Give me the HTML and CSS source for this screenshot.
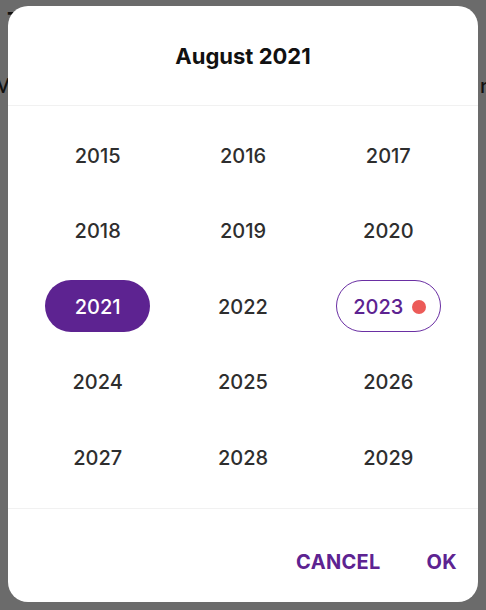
FILE: index.html
```html
<!DOCTYPE html>
<html>
<head>
<meta charset="utf-8">
<link rel="stylesheet" href="styles.css">
</head>
<body>
<div class="backdrop">
  <div class="bg-top">T</div>
  <div class="bg-line"><span>M</span><span>n</span></div>
</div>
<div class="dialog">
  <div class="header">August 2021</div>
  <div class="grid">
    <div class="cell"><span class="year">2015</span></div>
    <div class="cell"><span class="year">2016</span></div>
    <div class="cell"><span class="year">2017</span></div>
    <div class="cell"><span class="year">2018</span></div>
    <div class="cell"><span class="year">2019</span></div>
    <div class="cell"><span class="year">2020</span></div>
    <div class="cell"><span class="year selected">2021</span></div>
    <div class="cell"><span class="year">2022</span></div>
    <div class="cell"><span class="year current">2023<i class="dot"></i></span></div>
    <div class="cell"><span class="year">2024</span></div>
    <div class="cell"><span class="year">2025</span></div>
    <div class="cell"><span class="year">2026</span></div>
    <div class="cell"><span class="year">2027</span></div>
    <div class="cell"><span class="year">2028</span></div>
    <div class="cell"><span class="year">2029</span></div>
  </div>
  <div class="footer">
    <button class="btn">CANCEL</button>
    <button class="btn">OK</button>
  </div>
</div>
</body>
</html>
```
FILE: styles.css
```css
* { box-sizing: border-box; }
html, body { margin: 0; padding: 0; }
body {
  width: 486px;
  height: 610px;
  background: #6b6b6b;
  font-family: Inter, "Noto Sans", sans-serif;
  position: relative;
  overflow: hidden;
}
.backdrop {
  position: absolute;
  inset: 0;
}
.bg-top {
  position: absolute;
  left: 7px;
  top: 7px;
  font-size: 22px;
  font-weight: 700;
  color: #111;
}
.bg-line {
  position: absolute;
  left: -6px;
  right: -6px;
  top: 74px;
  display: flex;
  justify-content: space-between;
  font-size: 20px;
  font-weight: 500;
  color: #111;
}
.dialog {
  position: absolute;
  left: 8px;
  top: 6px;
  width: 470px;
  height: 596px;
  background: #fff;
  border-radius: 20px;
  display: flex;
  flex-direction: column;
  overflow: hidden;
}
.header {
  height: 100px;
  flex: none;
  display: flex;
  align-items: center;
  justify-content: center;
  font-size: 22px;
  font-weight: 700;
  color: #111;
  border-bottom: 1px solid #f1f1f1;
  padding-top: 1px;
}
.grid {
  display: grid;
  grid-template-columns: repeat(3, 1fr);
  grid-auto-rows: 75.5px;
  padding: 11px 17px 13px;
  border-bottom: 1px solid #f1f1f1;
}
.cell {
  display: flex;
  align-items: center;
  justify-content: center;
}
.year {
  width: 105px;
  height: 52px;
  border-radius: 26px;
  display: flex;
  align-items: center;
  justify-content: center;
  font-size: 20px;
  font-weight: 500;
  color: #2e2e2e;
  padding-top: 2px;
}
.year.selected {
  background: #5d2391;
  color: #fff;
}
.year.current {
  border: 1.5px solid #6a2fa3;
  color: #5d2391;
  gap: 9px;
  padding-left: 3px;
}
.dot {
  width: 14px;
  height: 14px;
  border-radius: 50%;
  background: #ec5b58;
  display: inline-block;
}
.footer {
  flex: 1;
  display: flex;
  justify-content: flex-end;
  align-items: center;
  gap: 46px;
  padding: 14px 21px 0 0;
}
.btn {
  border: 0;
  background: none;
  padding: 0;
  font-family: Inter, "Noto Sans", sans-serif;
  font-size: 20px;
  font-weight: 700;
  letter-spacing: 0.3px;
  color: #5d2391;
}
```
